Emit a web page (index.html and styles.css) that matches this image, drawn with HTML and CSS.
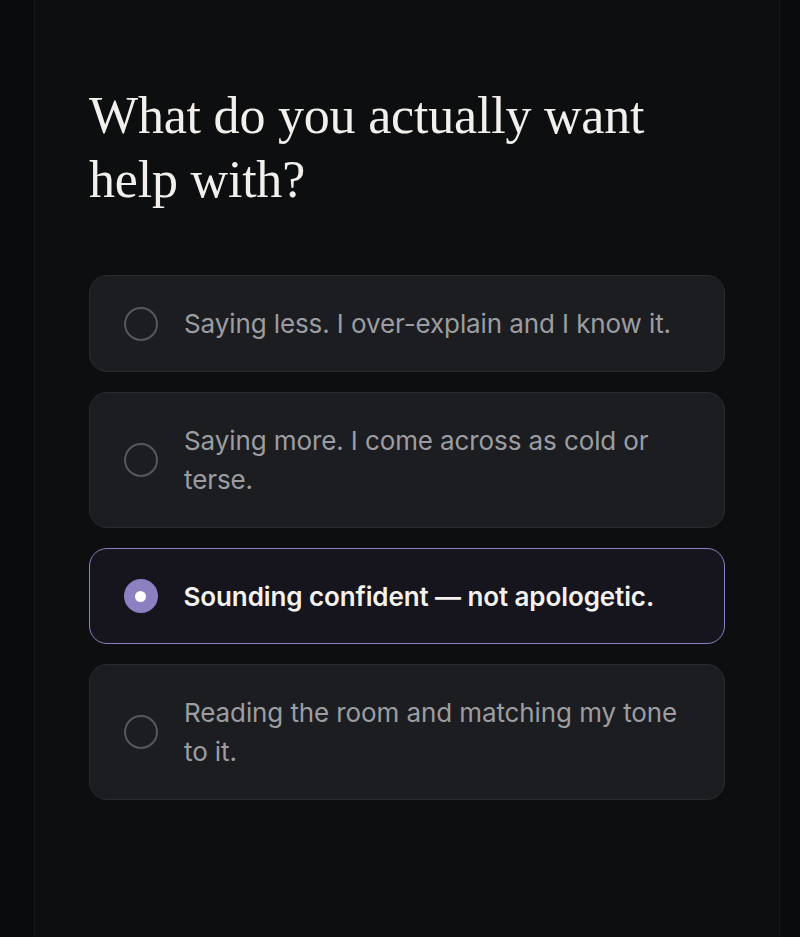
FILE: index.html
```html
<!DOCTYPE html>
<html lang="en">
<head>
<meta charset="utf-8">
<title>What do you actually want help with?</title>
<link rel="stylesheet" href="styles.css">
</head>
<body>
<main class="column">
  <h1 class="title">What do you actually want help with?</h1>
  <div class="options" role="radiogroup">
    <div class="option" role="radio" aria-checked="false">
      <span class="radio"></span>
      <span class="label">Saying less. I over-explain and I know it.</span>
    </div>
    <div class="option" role="radio" aria-checked="false">
      <span class="radio"></span>
      <span class="label">Saying more. I come across as cold or terse.</span>
    </div>
    <div class="option option--selected" role="radio" aria-checked="true">
      <span class="radio radio--on"><span class="dot"></span></span>
      <span class="label">Sounding confident — not apologetic.</span>
    </div>
    <div class="option" role="radio" aria-checked="false">
      <span class="radio"></span>
      <span class="label">Reading the room and matching my tone to it.</span>
    </div>
  </div>
</main>
</body>
</html>
```

FILE: styles.css
```css
* { box-sizing: border-box; }
html, body {
  margin: 0;
  padding: 0;
  background: #0a0b0d;
  height: 100%;
}
.column {
  margin-left: 34px;
  width: 746px;
  min-height: 100vh;
  background: #0d0e10;
  border-left: 1px solid #16171a;
  border-right: 1px solid #16171a;
  padding: 84px 54px 0 54px;
}
.title {
  margin: 0 0 63px 0;
  font-family: "Liberation Serif", "Times New Roman", serif;
  font-weight: 400;
  font-size: 52px;
  line-height: 64px;
  color: #f1f0ec;
  letter-spacing: -0.2px;
  max-width: 600px;
}
.options {
  display: flex;
  flex-direction: column;
  gap: 20px;
}
.option {
  display: flex;
  align-items: center;
  gap: 26px;
  padding: 28px 34px;
  background: #1c1d20;
  border: 1px solid #2a2b2f;
  border-radius: 18px;
}
.option--selected {
  background: #16151d;
  border: 1.5px solid #8c80c4;
  padding: 27.5px 33.5px;
}
.radio {
  flex: none;
  width: 34px;
  height: 34px;
  border-radius: 50%;
  border: 2.5px solid #56575b;
  display: flex;
  align-items: center;
  justify-content: center;
}
.radio--on {
  background: #8c80c1;
  border-color: #8c80c1;
}
.dot {
  width: 11px;
  height: 11px;
  border-radius: 50%;
  background: #ffffff;
}
.label {
  font-family: Inter, "Noto Sans", sans-serif;
  font-size: 26px;
  line-height: 39px;
  letter-spacing: -0.1px;
  color: #9c9da2;
}
.option--selected .label {
  color: #f3f2ef;
  font-weight: 600;
}
```
